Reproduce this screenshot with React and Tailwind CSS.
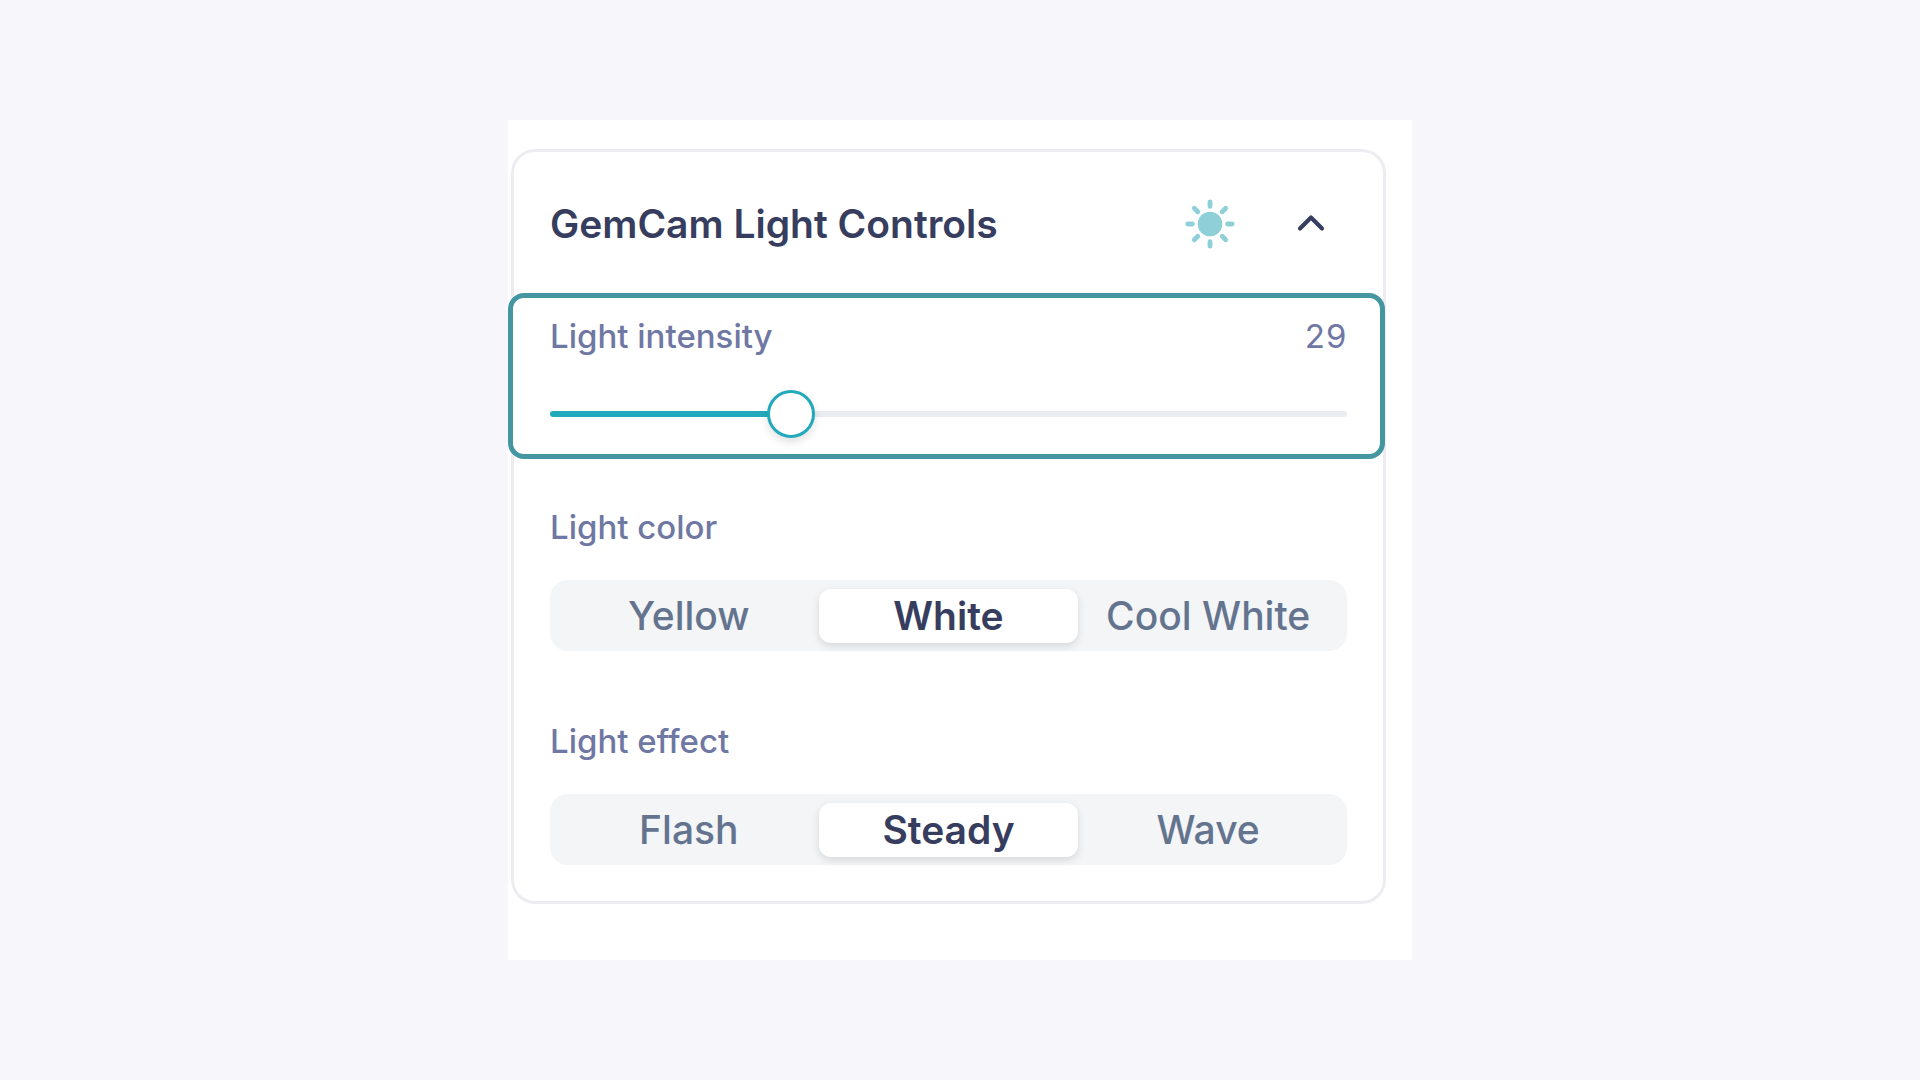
import { useId, useState } from "react";
import clsx from "clsx";

const COLORS = ["Yellow", "White", "Cool White"];
const EFFECTS = ["Flash", "Steady", "Wave"];

function SunIcon() {
  return (
    <svg
      viewBox="0 0 52 52"
      className="size-[52px]"
      fill="none"
      stroke="#8fcfd8"
      strokeWidth="4.8"
      strokeLinecap="round"
      aria-hidden="true"
    >
      <circle cx="26" cy="26" r="12.3" fill="#8fcfd8" stroke="none" />
      <path d="M26 3.8v4.6M26 43.6v4.6M3.8 26h4.6M43.6 26h4.6" />
      <path d="M10.3 10.3l3.5 3.5M38.2 38.2l3.5 3.5M10.3 41.7l3.5-3.5M38.2 13.8l3.5-3.5" />
    </svg>
  );
}

function ChevronIcon({ open }) {
  return (
    <svg
      viewBox="0 0 32 32"
      className={clsx("size-8", !open && "rotate-180")}
      fill="none"
      stroke="currentColor"
      strokeWidth="4.2"
      strokeLinecap="round"
      strokeLinejoin="round"
      aria-hidden="true"
    >
      <path d="M5 20.5L16 9.5l11 11" />
    </svg>
  );
}

function IntensitySlider({ value, onChange }) {
  const id = useId();

  return (
    <div className="-ml-[6px] -mr-[2px] rounded-2xl border-5 border-[#4497a1] bg-white pt-[18px] pb-[37px] pl-[37px] pr-[33px]">
      <div className="flex items-center justify-between text-[33px] leading-10 text-[#6f78a3]">
        <label htmlFor={id} className="font-medium">
          Light intensity
        </label>
        <output htmlFor={id} className="tabular-nums">
          {value}
        </output>
      </div>
      <input
        id={id}
        type="range"
        min="0"
        max="100"
        value={value}
        onChange={(e) => onChange(Number(e.target.value))}
        className="mt-[55px] block h-[6px] w-full cursor-pointer appearance-none rounded-full outline-none [&::-webkit-slider-thumb]:size-12 [&::-webkit-slider-thumb]:appearance-none [&::-webkit-slider-thumb]:rounded-full [&::-webkit-slider-thumb]:border-3 [&::-webkit-slider-thumb]:border-[#22a9bb] [&::-webkit-slider-thumb]:bg-white [&::-webkit-slider-thumb]:shadow-[0_4px_8px_rgba(0,0,0,0.12)]"
        style={{
          background: `linear-gradient(to right, #22a9bb ${value}%, #ebecf1 ${value}%)`,
        }}
      />
    </div>
  );
}

function SegmentedControl({ label, options, value, onChange }) {
  const id = useId();

  return (
    <div role="radiogroup" aria-labelledby={id} className="px-9">
      <h3 id={id} className="text-[33px] leading-10 font-medium text-[#6f78a3]">
        {label}
      </h3>
      <div className="mt-[33px] grid grid-cols-3 rounded-[18px] bg-[#f3f5f7] px-[9px] pt-[9px] pb-2">
        {options.map((option) => (
          <label
            key={option}
            className={clsx(
              "relative cursor-pointer rounded-xl text-center text-[39px] leading-[54px] whitespace-nowrap",
              option === value
                ? "bg-white font-semibold text-[#373d5e] shadow-[0_3px_8px_rgba(0,0,0,0.12)]"
                : "font-medium text-[#64748f]"
            )}
          >
            <input
              type="radio"
              name={id}
              value={option}
              checked={option === value}
              onChange={() => onChange(option)}
              className="sr-only"
            />
            {option}
          </label>
        ))}
      </div>
    </div>
  );
}

export default function App() {
  const [open, setOpen] = useState(true);
  const [intensity, setIntensity] = useState(29);
  const [color, setColor] = useState("White");
  const [effect, setEffect] = useState("Steady");

  return (
    <main className="flex min-h-screen items-center justify-center bg-[#f6f6fb] font-['Inter',sans-serif]">
      <div className="w-full max-w-[904px] bg-white pt-[29px] pr-[26px] pb-14 pl-[3px]">
        <section className="rounded-3xl border-3 border-[#ededf1]">
          <header className="flex items-center justify-between pt-[42px] pr-14 pb-[39px] pl-9 text-[#373d5e]">
            <h2 className="text-[39px] leading-[60px] font-semibold">
              GemCam Light Controls
            </h2>
            <div className="flex items-center gap-[59px]">
              <SunIcon />
              <button
                type="button"
                onClick={() => setOpen(!open)}
                aria-expanded={open}
                aria-label="Toggle light controls"
                className="cursor-pointer"
              >
                <ChevronIcon open={open} />
              </button>
            </div>
          </header>

          {open && (
            <>
              <IntensitySlider value={intensity} onChange={setIntensity} />
              <div className="flex flex-col gap-[70px] pt-12 pb-9">
                <SegmentedControl
                  label="Light color"
                  options={COLORS}
                  value={color}
                  onChange={setColor}
                />
                <SegmentedControl
                  label="Light effect"
                  options={EFFECTS}
                  value={effect}
                  onChange={setEffect}
                />
              </div>
            </>
          )}
        </section>
      </div>
    </main>
  );
}
